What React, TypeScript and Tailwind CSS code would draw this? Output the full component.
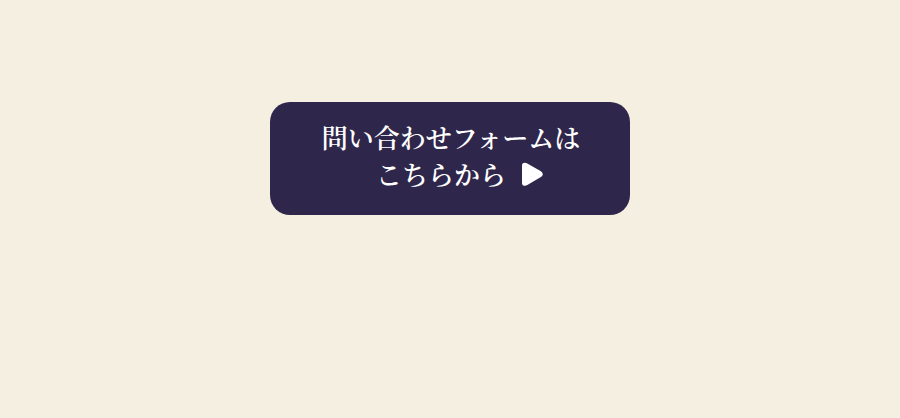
export default function App() {
  return (
    <main
      lang="ja"
      className="flex min-h-screen items-start justify-center bg-[#f5efe2] px-4 pt-[102px] font-['Noto_Serif_CJK_JP','Noto_Serif_JP','Noto_Sans_CJK_JP',serif]"
    >
      <a
        href="#contact"
        className="flex w-full max-w-[360px] flex-col items-center rounded-[20px] bg-[#2f274b] pt-4 pb-[23px] text-[26px] leading-[37px] font-semibold text-white"
      >
        <span className="pl-0.5">問い合わせフォームは</span>
        <span className="flex items-center gap-4 pl-5">
          こちらから
          <svg aria-hidden="true" viewBox="0 0 22 24" className="h-6 w-[22px]" fill="currentColor">
            <path d="M0 3.5Q0 0.7 2.8 0.7Q4.2 0.7 5.3 1.4L18.5 9.1Q20.8 10.4 20.8 12.2T18.5 15.2L5.3 22.9Q4.2 23.7 2.8 23.7Q0 23.7 0 20.9Z" />
          </svg>
        </span>
      </a>
    </main>
  );
}
